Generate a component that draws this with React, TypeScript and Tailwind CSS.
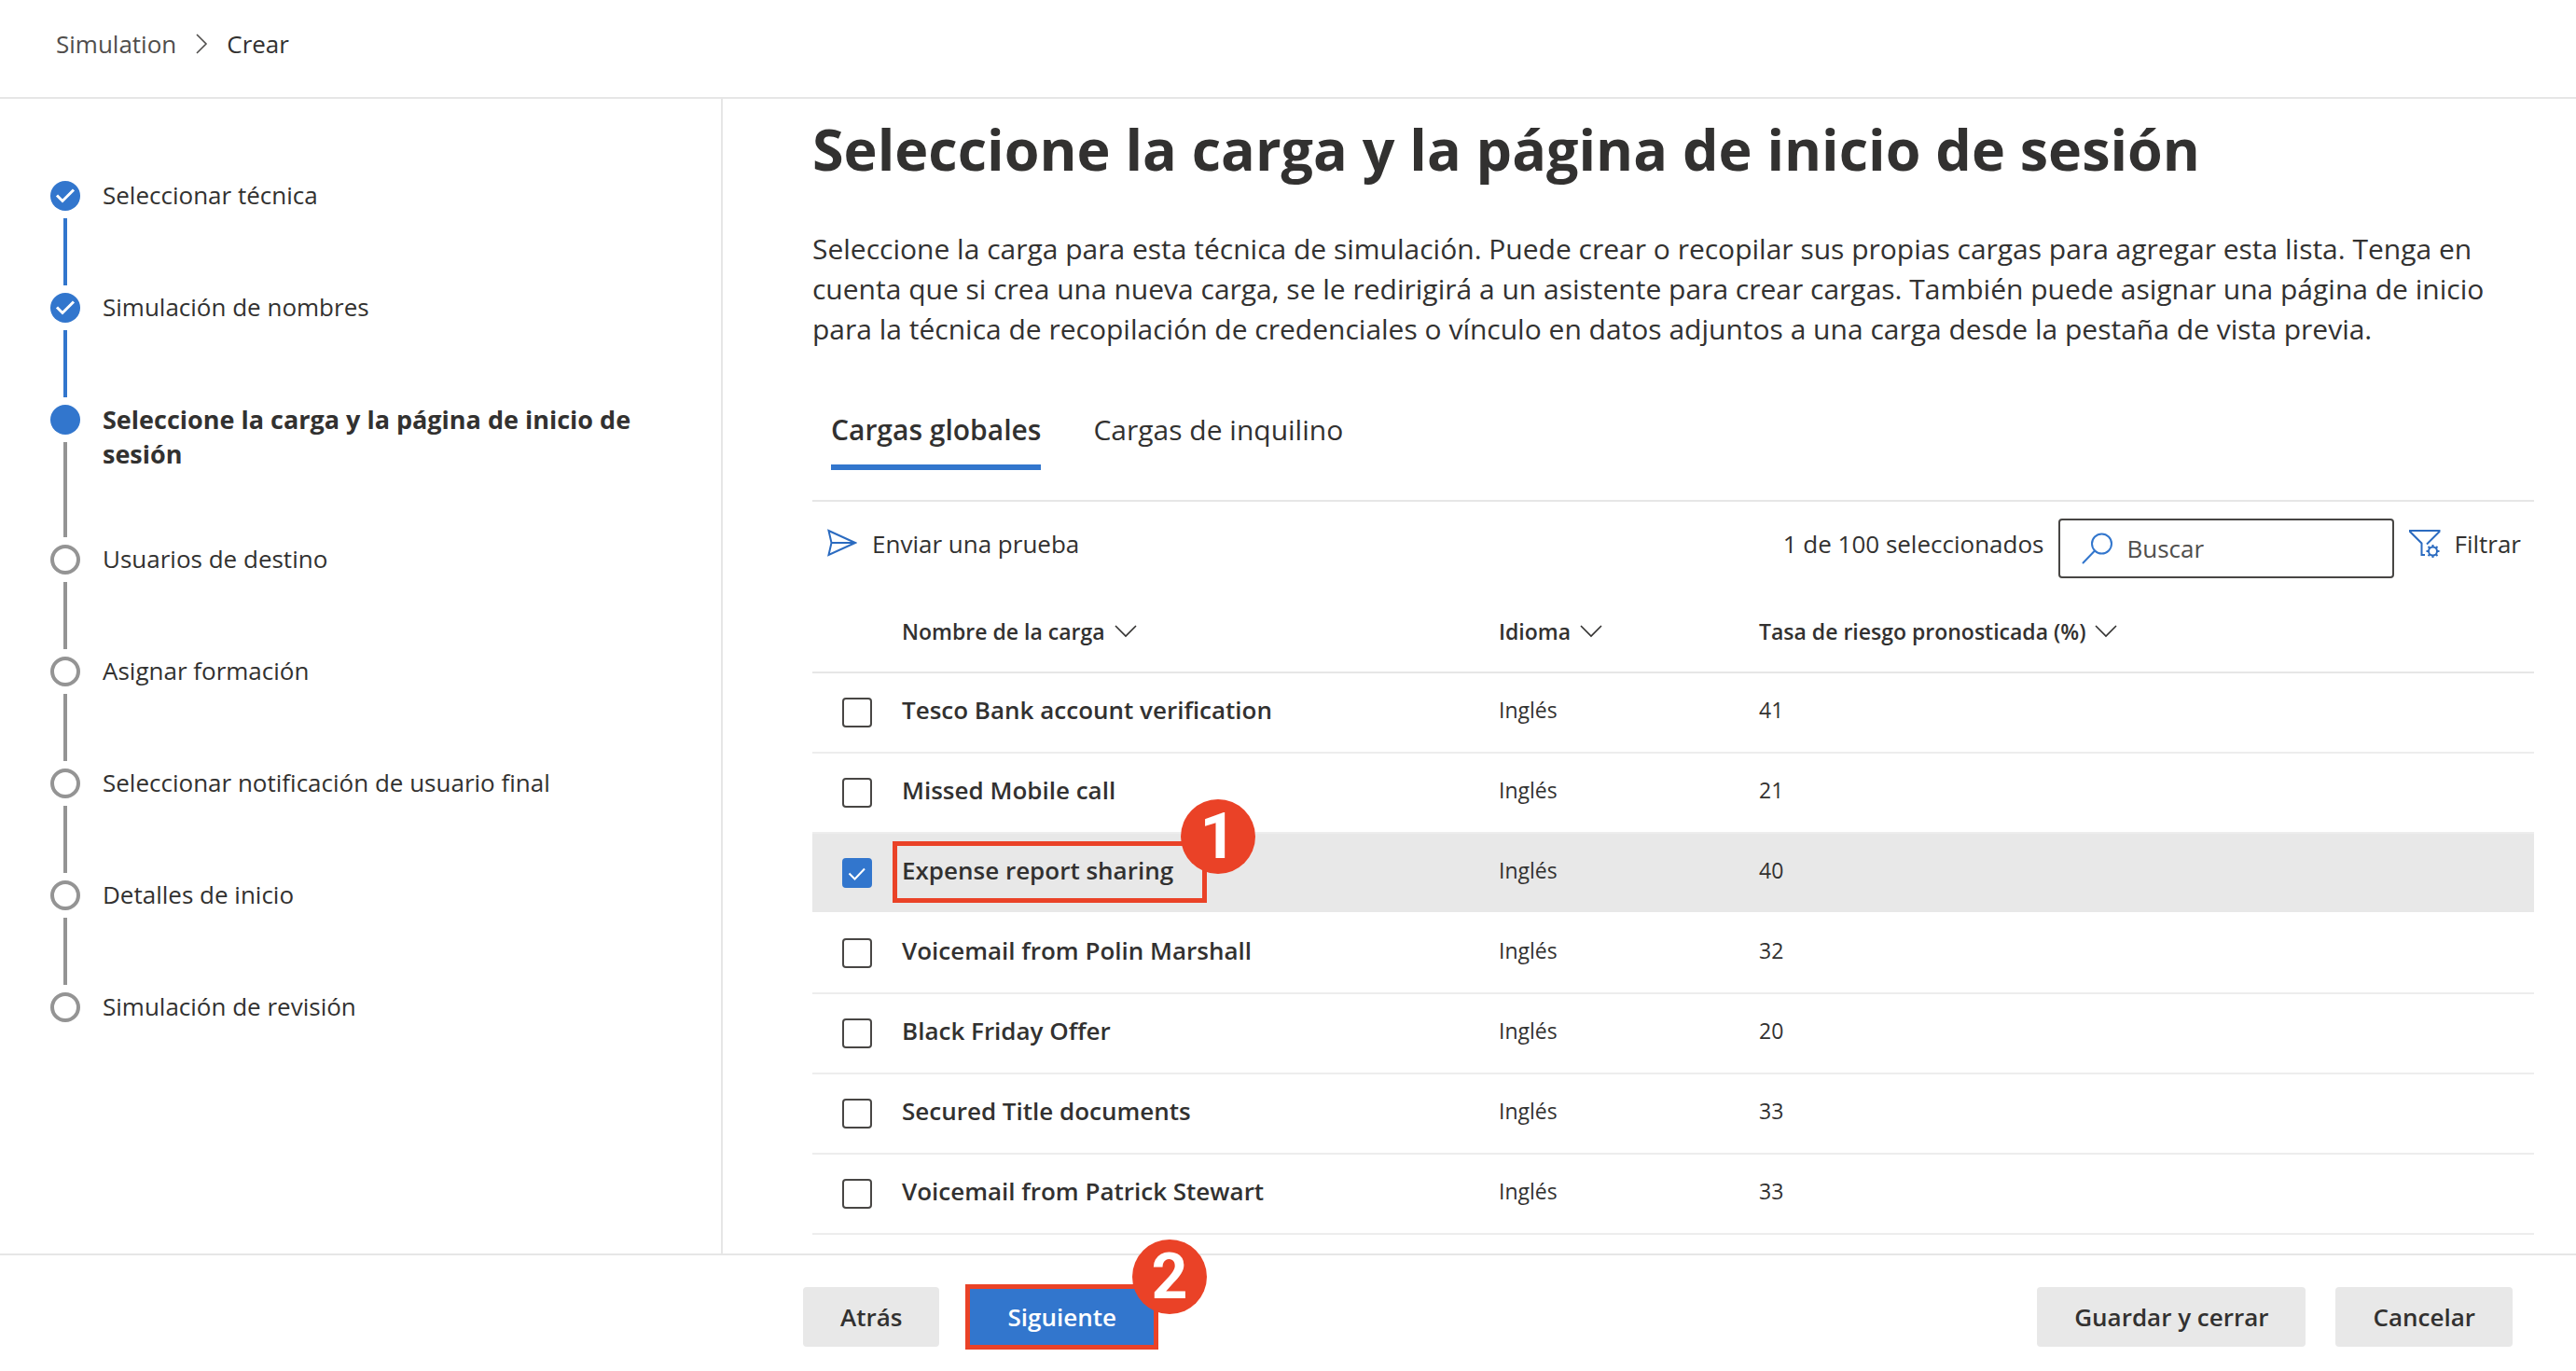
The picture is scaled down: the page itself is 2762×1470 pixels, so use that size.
import { useState, type ReactNode } from "react";

type StepState = "done" | "current" | "pending";

const steps: { label: string; state: StepState }[] = [
  { label: "Seleccionar técnica", state: "done" },
  { label: "Simulación de nombres", state: "done" },
  { label: "Seleccione la carga y la página de inicio de sesión", state: "current" },
  { label: "Usuarios de destino", state: "pending" },
  { label: "Asignar formación", state: "pending" },
  { label: "Seleccionar notificación de usuario final", state: "pending" },
  { label: "Detalles de inicio", state: "pending" },
  { label: "Simulación de revisión", state: "pending" },
];

const payloads = [
  { name: "Tesco Bank account verification", language: "Inglés", rate: 41 },
  { name: "Missed Mobile call", language: "Inglés", rate: 21 },
  { name: "Expense report sharing", language: "Inglés", rate: 40 },
  { name: "Voicemail from Polin Marshall", language: "Inglés", rate: 32 },
  { name: "Black Friday Offer", language: "Inglés", rate: 20 },
  { name: "Secured Title documents", language: "Inglés", rate: 33 },
  { name: "Voicemail from Patrick Stewart", language: "Inglés", rate: 33 },
];

const HIGHLIGHTED = "Expense report sharing";

function SendIcon() {
  return (
    <svg width="32" height="32" viewBox="0 0 32 32" fill="none" stroke="#2b6bc0" strokeWidth="2" aria-hidden="true">
      <path d="M1.5 2 30 15 1.5 28 4.5 15ZM4.5 15H30" />
    </svg>
  );
}

function SearchIcon() {
  return (
    <svg width="34" height="34" viewBox="0 0 34 34" fill="none" stroke="#3276cd" strokeWidth="2" strokeLinecap="round" aria-hidden="true">
      <circle cx="21.5" cy="12" r="10.5" />
      <path d="M14 19.5 1.5 32.5" />
    </svg>
  );
}

function FilterSettingsIcon() {
  return (
    <svg width="34" height="32" viewBox="0 0 34 32" fill="none" stroke="#2b6bc0" strokeWidth="2" aria-hidden="true">
      <path d="M17 28H13.5V15.5L1 3V2H32.5V3L19 16.5" />
      <circle cx="25.5" cy="24" r="4.5" />
      <path d="M25.5 19.5V17M25.5 28.5V31M21 24H18.5M30 24H32.5M22.3 20.8 20.5 19M28.7 20.8 30.5 19M22.3 27.2 20.5 29M28.7 27.2 30.5 29" />
    </svg>
  );
}

function ChevronDown() {
  return (
    <svg width="24" height="14" viewBox="0 0 24 14" fill="none" stroke="#323130" strokeWidth="1.6" aria-hidden="true">
      <path d="M1 1 12 12 23 1" />
    </svg>
  );
}

function Marker({ state }: { state: StepState }) {
  if (state === "pending") {
    return <span className="size-8 rounded-full border-4 border-[#949494]" />;
  }
  return (
    <span className="size-8 rounded-full bg-[#3276cd]">
      {state === "done" && (
        <svg viewBox="0 0 32 32" fill="none" stroke="white" strokeWidth="3" aria-hidden="true">
          <path d="M7 15.5 13 21.5 25 9.5" />
        </svg>
      )}
    </span>
  );
}

function Callout({ box, badge, number }: { box: string; badge: string; number: number }) {
  return (
    <>
      <span className={`pointer-events-none absolute border-[5px] border-[#ea4227] ${box}`} />
      <span
        className={`pointer-events-none absolute flex size-20 items-center justify-center rounded-full bg-[#ea4227] font-['Roboto','Liberation_Sans',sans-serif] text-[68px] leading-none font-bold text-white ${badge}`}
      >
        {number}
      </span>
    </>
  );
}

function ColumnHeader({ children }: { children: ReactNode }) {
  return (
    <th className="h-[88px] border-b-2 border-[#e6e6e6] p-0 text-left">
      <button type="button" className="flex items-center gap-[10px] text-[23px] leading-8 font-semibold">
        {children}
        <ChevronDown />
      </button>
    </th>
  );
}

export default function App() {
  const [selected, setSelected] = useState<string[]>([HIGHLIGHTED]);
  const [tab, setTab] = useState("Cargas globales");

  const toggle = (name: string) =>
    setSelected((current) => (current.includes(name) ? current.filter((n) => n !== name) : [...current, name]));

  return (
    <div className="flex min-h-screen flex-col bg-white font-['Open_Sans','Noto_Sans',sans-serif] text-[26px] leading-9 text-[#323130]">
      <header className="border-b-2 border-[#e6e6e6]">
        <nav aria-label="Ruta" className="flex h-26 items-center gap-5 pb-[10px] pl-[60px]">
          <a href="#simulation" className="text-[#504e4c]">
            Simulation
          </a>
          <svg width="14" height="22" viewBox="0 0 14 22" fill="none" stroke="#504e4c" strokeWidth="1.6" aria-hidden="true">
            <path d="M2 1 12 11 2 21" />
          </svg>
          <span aria-current="page">Crear</span>
        </nav>
      </header>

      <div className="flex flex-1">
        <aside className="w-[775px] shrink-0 border-r-2 border-[#e6e6e6] pt-[85px] pr-8 pl-[54px]">
          <ol>
            {steps.map((step, i) => {
              const last = i === steps.length - 1;
              return (
                <li key={step.label} className="flex min-h-[120px] gap-6">
                  <div className="flex flex-col items-center gap-2 pt-[3px] pb-[5px]">
                    <Marker state={step.state} />
                    {!last && (
                      <span className={`w-1 flex-1 ${step.state === "done" ? "bg-[#3276cd]" : "bg-[#949494]"}`} />
                    )}
                  </div>
                  <span
                    className={
                      step.state === "current"
                        ? "pb-[76px] text-[27px] leading-[37px] font-bold"
                        : "leading-[37px]"
                    }
                  >
                    {step.label}
                  </span>
                </li>
              );
            })}
          </ol>
        </aside>

        <main className="min-w-0 flex-1 pt-[14px] pr-[45px] pb-5 pl-24">
          <h1 className="text-[61px] leading-[80px] font-bold">Seleccione la carga y la página de inicio de sesión</h1>
          <p className="mt-[45px] text-[30px] leading-[43px]">
            Seleccione la carga para esta técnica de simulación. Puede crear o recopilar sus propias cargas para agregar
            esta lista. Tenga en cuenta que si crea una nueva carga, se le redirigirá a un asistente para crear cargas.
            También puede asignar una página de inicio para la técnica de recopilación de credenciales o vínculo en datos
            adjuntos a una carga desde la pestaña de vista previa.
          </p>

          <div role="tablist" className="mt-[67px] flex gap-14 border-b-2 border-[#e6e6e6] pb-8 pl-5">
            {["Cargas globales", "Cargas de inquilino"].map((name) => (
              <button
                key={name}
                type="button"
                role="tab"
                aria-selected={tab === name}
                onClick={() => setTab(name)}
                className={`border-b-6 pb-[17px] text-[30px] leading-10 ${
                  tab === name ? "border-[#3276cd] font-semibold" : "border-transparent"
                }`}
              >
                {name}
              </button>
            ))}
          </div>

          <div className="flex items-start gap-4 pt-[18px] pr-[14px] pb-[14px] pl-4">
            <button type="button" className="mr-auto flex h-[54px] items-center gap-4">
              <SendIcon />
              Enviar una prueba
            </button>
            <span className="flex h-[54px] items-center">{selected.length} de 100 seleccionados</span>
            <label className="flex h-16 w-[360px] items-center gap-[14px] rounded border-2 border-[#484644] pr-4 pl-[23px]">
              <SearchIcon />
              <input
                type="search"
                aria-label="Buscar"
                placeholder="Buscar"
                className="min-w-0 flex-1 outline-none placeholder:text-[#504e4c]"
              />
            </label>
            <button type="button" className="flex h-[54px] items-center gap-[14px]">
              <FilterSettingsIcon />
              Filtrar
            </button>
          </div>

          <table className="w-full table-fixed border-separate border-spacing-0">
            <colgroup>
              <col className="w-24" />
              <col className="w-[640px]" />
              <col className="w-[279px]" />
              <col />
            </colgroup>
            <thead>
              <tr>
                <th className="border-b-2 border-[#e6e6e6] p-0" aria-label="Selección" />
                <ColumnHeader>Nombre de la carga</ColumnHeader>
                <ColumnHeader>Idioma</ColumnHeader>
                <ColumnHeader>Tasa de riesgo pronosticada (%)</ColumnHeader>
              </tr>
            </thead>
            <tbody>
              {payloads.map((payload, i) => {
                const checked = selected.includes(payload.name);
                const cell = `h-[86px] border-b-2 p-0 ${checked ? "border-white bg-[#e8e8e8]" : "border-[#ededed]"}`;
                const id = `payload-${i}`;
                return (
                  <tr key={payload.name}>
                    <td className={cell}>
                      <span className="ml-8 grid size-8">
                        <input
                          id={id}
                          type="checkbox"
                          checked={checked}
                          onChange={() => toggle(payload.name)}
                          className="col-start-1 row-start-1 size-8 appearance-none rounded border-2 border-[#484644] bg-white checked:border-[#3276cd] checked:bg-[#3276cd]"
                        />
                        {checked && (
                          <svg
                            viewBox="0 0 32 32"
                            fill="none"
                            stroke="white"
                            strokeWidth="2"
                            className="pointer-events-none col-start-1 row-start-1"
                            aria-hidden="true"
                          >
                            <path d="M7.5 16.5 13.5 22.5 24 11.5" />
                          </svg>
                        )}
                      </span>
                    </td>
                    <td className={`${cell} pb-[6px]`}>
                      <div className="relative w-fit font-semibold">
                        <label htmlFor={id}>{payload.name}</label>
                        {payload.name === HIGHLIGHTED && (
                          <Callout number={1} box="-top-[13px] -right-9 -bottom-[17px] -left-[10px]" badge="-top-[58px] -right-[88px]" />
                        )}
                      </div>
                    </td>
                    <td className={`${cell} pb-[6px] text-[23px]`}>{payload.language}</td>
                    <td className={`${cell} pb-[6px] text-[23px]`}>{payload.rate}</td>
                  </tr>
                );
              })}
            </tbody>
          </table>
        </main>
      </div>

      <footer className="flex gap-8 border-t-2 border-[#e6e6e6] pt-[34px] pr-[68px] pb-[26px] pl-[861px] font-semibold">
        <button type="button" className="h-16 rounded bg-[#e8e8e8] px-10">
          Atrás
        </button>
        <button type="button" className="relative mr-auto h-16 bg-[#3276cd] px-[41px] text-white">
          Siguiente
          <Callout number={2} box="-inset-x-1 -inset-y-[3px]" badge="-top-[51px] -right-14" />
        </button>
        <button type="button" className="h-16 rounded bg-[#e8e8e8] px-10">
          Guardar y cerrar
        </button>
        <button type="button" className="h-16 rounded bg-[#e8e8e8] px-10">
          Cancelar
        </button>
      </footer>
    </div>
  );
}
